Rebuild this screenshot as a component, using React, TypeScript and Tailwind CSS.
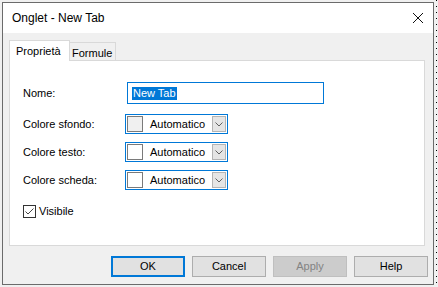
import React from 'react'

const FONT = { fontFamily: '"Liberation Sans", Arial, sans-serif' }

function Chevron() {
  return (
    <svg width="8" height="5" viewBox="0 0 8 5" className="block">
      <path d="M0.5 0.5 L4 4 L7.5 0.5" fill="none" stroke="#606060" strokeWidth="1" />
    </svg>
  )
}

function ColorCombo({ swatch }: { swatch: string }) {
  return (
    <div className="w-[103px] h-[20px] border border-[#0078d7] bg-white flex items-stretch p-px">
      <div className={`w-[16px] border border-[#7a7a7a] ${swatch}`} />
      <div className="flex-1 flex items-center justify-center text-[11px] leading-none">Automatico</div>
      <div className="w-[14px] bg-[#e5e5e5] border border-[#b4b4b4] flex items-center justify-center">
        <Chevron />
      </div>
    </div>
  )
}

function ComboRow({ label, swatch, className }: { label: string; swatch: string; className: string }) {
  return (
    <div className={`flex items-center h-[20px] ${className}`}>
      <span className="w-[102px] text-[11px]">{label}</span>
      <ColorCombo swatch={swatch} />
    </div>
  )
}

function DialogButton({ label, variant }: { label: string; variant?: 'default' | 'disabled' }) {
  const cls =
    variant === 'default'
      ? 'border-2 border-[#0078d7] bg-[#e1e1e1] text-black'
      : variant === 'disabled'
        ? 'border border-[#bfbfbf] bg-[#cccccc] text-[#838383]'
        : 'border border-[#adadad] bg-[#e1e1e1] text-black'
  return (
    <div className={`w-[74px] h-[21px] flex items-center justify-center text-[11px] ${cls}`}>{label}</div>
  )
}

export default function App() {
  return (
    <div className="w-[438px] h-[287px] bg-[#f0f0f0] flex text-black" style={FONT}>
      {/* Dialog window */}
      <div className="ml-[2px] mt-[2px] w-[432px] h-[283px] border border-[#6b6b6b] flex flex-col bg-[#f0f0f0]">
        {/* Title bar */}
        <div className="h-[30px] bg-white flex items-center justify-between pl-[9px] pr-[10px]">
          <span className="text-[12px]">Onglet - New Tab</span>
          <svg width="10" height="10" viewBox="0 0 10 10">
            <path d="M0 0 L10 10 M10 0 L0 10" stroke="#111" strokeWidth="1" />
          </svg>
        </div>

        {/* Body */}
        <div className="flex-1 flex flex-col pt-[7px] pl-[6px] pr-[7px]">
          {/* Tabs */}
          <div className="flex items-end h-[20px] relative z-10">
            <div className="w-[61px] h-[21px] -mb-px border border-b-0 border-[#d9d9d9] bg-white pl-[6px] pt-[3px] text-[11px] leading-[14px]">
              Proprietà
            </div>
            <div className="w-[46px] h-[18px] border border-l-0 border-b-0 border-[#d9d9d9] bg-[#f0f0f0] pl-[2px] pt-[3px] text-[11px] leading-[14px]">
              Formule
            </div>
          </div>

          {/* Panel */}
          <div className="w-[416px] h-[186px] border border-[#d9d9d9] bg-white flex flex-col pl-[13px] pt-[21px]">
            <div className="flex items-center h-[22px]">
              <span className="w-[104px] text-[11px]">Nome:</span>
              <div className="w-[197px] h-[22px] border border-[#0078d7] flex items-center pl-[4px]">
                <span className="bg-[#0078d7] text-white text-[11px] leading-[13px] px-px">New Tab</span>
              </div>
            </div>
            <ComboRow label="Colore sfondo:" swatch="bg-[#f0f0f0]" className="mt-[10px]" />
            <ComboRow label="Colore testo:" swatch="bg-white" className="mt-[8px]" />
            <ComboRow label="Colore scheda:" swatch="bg-white" className="mt-[8px]" />

            <div className="flex items-center mt-[13px]">
              <div className="w-[13px] h-[13px] border border-[#333] bg-white flex items-center justify-center">
                <svg width="9" height="7" viewBox="0 0 9 7">
                  <path d="M0.5 3.5 L3 6 L8.5 0.5" fill="none" stroke="#444" strokeWidth="1" />
                </svg>
              </div>
              <span className="ml-[3px] text-[11px]">Visibile</span>
            </div>
          </div>

          {/* Buttons */}
          <div className="flex justify-end gap-[7px] mt-[10px] -mr-[2px]">
            <DialogButton label="OK" variant="default" />
            <DialogButton label="Cancel" />
            <DialogButton label="Apply" variant="disabled" />
            <DialogButton label="Help" />
          </div>
        </div>
      </div>

      {/* Right edge dotted strip */}
      <div className="w-[4px] h-full flex">
        <div className="ml-[2px] w-px h-full bg-[repeating-linear-gradient(to_bottom,#000_0_1px,transparent_1px_6px)]" />
      </div>
    </div>
  )
}
